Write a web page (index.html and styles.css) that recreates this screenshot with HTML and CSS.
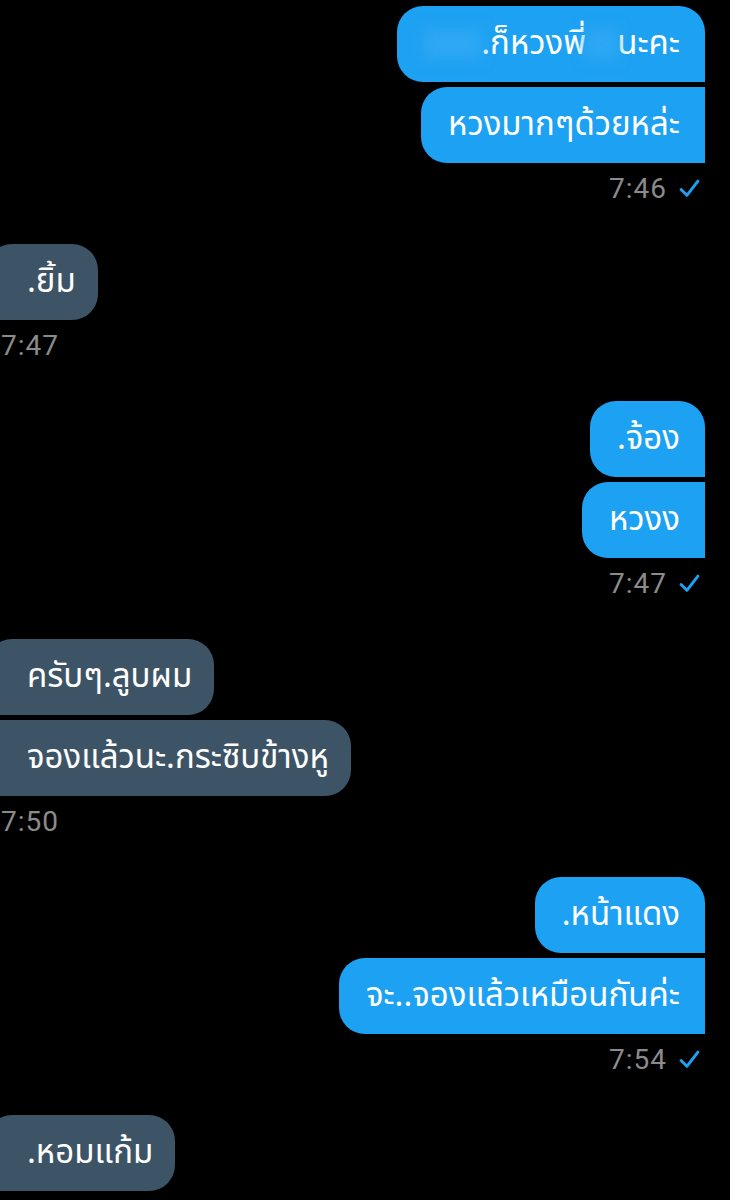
FILE: index.html
```html
<!DOCTYPE html>
<html lang="th">
<head>
    <meta charset="UTF-8">
    <meta name="viewport" content="width=device-width, initial-scale=1.0">
    <title>Chat</title>
    <link rel="stylesheet" href="styles.css">
</head>
<body>
    <div class="chat">
        <div class="group out">
            <div class="bubble first"><span class="blur w60"></span>.ก็หวงพี่<span class="blur w30"></span>นะคะ</div>
            <div class="bubble last">หวงมากๆด้วยหล่ะ</div>
            <div class="meta">7:46 <svg class="tick" viewBox="0 0 20 20"><path d="M2 11 L7.5 16.5 L18 3"/></svg></div>
        </div>

        <div class="group in">
            <div class="bubble single">.ยิ้ม</div>
            <div class="meta">7:47</div>
        </div>

        <div class="group out">
            <div class="bubble first">.จ้อง</div>
            <div class="bubble last">หวงง</div>
            <div class="meta">7:47 <svg class="tick" viewBox="0 0 20 20"><path d="M2 11 L7.5 16.5 L18 3"/></svg></div>
        </div>

        <div class="group in">
            <div class="bubble first">ครับๆ.ลูบผม</div>
            <div class="bubble last">จองแล้วนะ.กระซิบข้างหู</div>
            <div class="meta">7:50</div>
        </div>

        <div class="group out">
            <div class="bubble first">.หน้าแดง</div>
            <div class="bubble last">จะ..จองแล้วเหมือนกันค่ะ</div>
            <div class="meta">7:54 <svg class="tick" viewBox="0 0 20 20"><path d="M2 11 L7.5 16.5 L18 3"/></svg></div>
        </div>

        <div class="group in">
            <div class="bubble single">.หอมแก้ม</div>
        </div>
    </div>
</body>
</html>
```

FILE: styles.css
```css
body {
    margin: 0;
    background: #000;
    font-family: "Noto Sans Thai", "Noto Sans", "DejaVu Sans", sans-serif;
    overflow: hidden;
}

.chat {
    display: flex;
    flex-direction: column;
    padding: 6px 25px 0 0;
}

.group {
    display: flex;
    flex-direction: column;
    gap: 5px;
    margin-bottom: 41px;
}

.group.out {
    align-items: flex-end;
}

.group.in {
    align-items: flex-start;
}

.bubble {
    height: 76px;
    box-sizing: border-box;
    padding: 0 25px 0 27px;
    display: flex;
    align-items: center;
    font-size: 33px;
    color: #fff;
    white-space: nowrap;
}

.out .bubble {
    background: #1da1f2;
    border-radius: 26px 0 0 26px;
}

.out .bubble.first {
    border-top-right-radius: 26px;
}

.in .bubble {
    background: #3d5466;
    border-radius: 0 26px 26px 0;
    margin-left: -14px;
    padding-left: 41px;
    padding-right: 22px;
}

.in .bubble.first,
.in .bubble.single {
    border-top-left-radius: 26px;
}

.blur {
    display: inline-block;
    height: 30px;
    background: #2ea8f3;
    filter: blur(7px);
}

.w60 { width: 57px; }
.w30 { width: 31px; }

.meta {
    display: flex;
    align-items: center;
    gap: 12px;
    height: 30px;
    margin-top: 5px;
    font-family: Roboto, "Liberation Sans", sans-serif;
    font-size: 28px;
    letter-spacing: 1px;
    color: #8b8b8b;
}

.out .meta {
    margin-right: 5px;
}

.in .meta {
    margin-left: 1px;
}

.tick {
    width: 21px;
    height: 21px;
    fill: none;
    stroke: #1da1f2;
    stroke-width: 2.8;
    stroke-linecap: round;
    stroke-linejoin: round;
}
```
